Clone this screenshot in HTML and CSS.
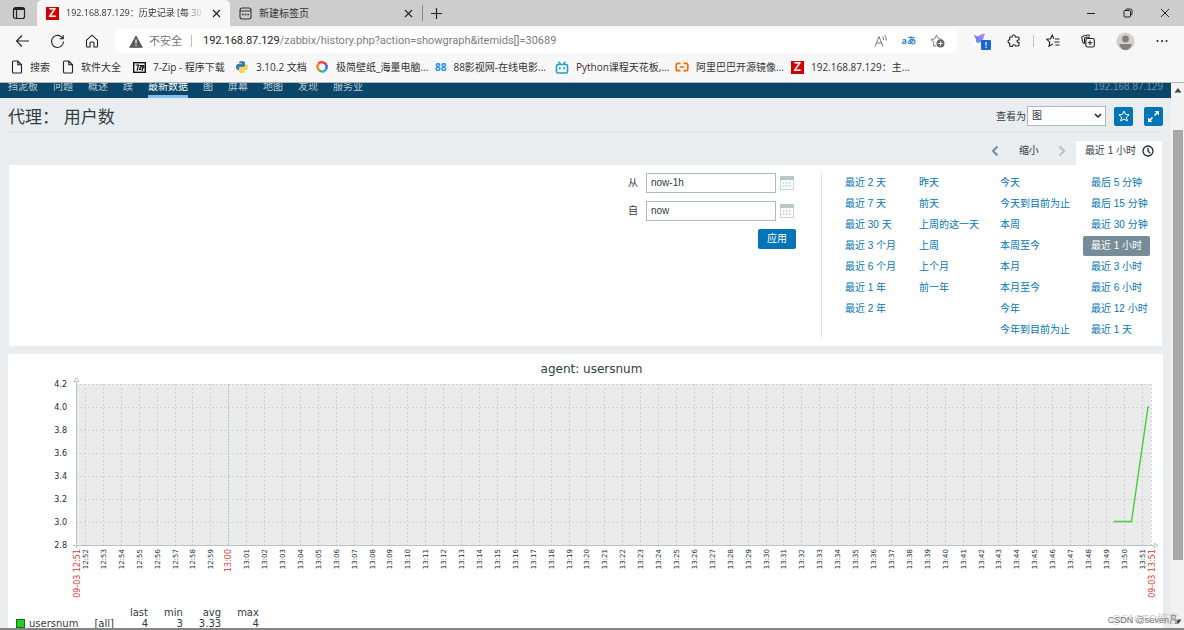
FILE: index.html
```html
<!DOCTYPE html>
<html lang="zh-CN">
<head>
<meta charset="utf-8">
<title>192.168.87.129：历史记录 [每 30 秒刷新]</title>
<link rel="stylesheet" href="styles.css">
</head>
<body>
<header class="browser">
  <div class="tabbar">
    <button class="icon-btn tab-actions" aria-label="标签操作菜单"><svg width="14" height="14" viewBox="0 0 14 14"><rect x="1.5" y="1.5" width="11" height="11" rx="2" fill="none" stroke="#222" stroke-width="1.2"/><path d="M2 3h10" stroke="#222" stroke-width="2" fill="none"/><path d="M4.500 4v8" stroke="#222" stroke-width="1.200"/></svg></button>
    <div class="tab tab-active">
      <span class="zlogo">Z</span>
      <span class="tab-title fade">192.168.87.129：历史记录 [每 30</span>
      <button class="icon-btn" aria-label="关闭标签页"><svg width="9" height="9" viewBox="0 0 9 9"><path d="M1 1l7 7M8 1l-7 7" stroke="#222" stroke-width="1.1"/></svg></button>
    </div>
    <div class="tab">
      <svg width="13" height="13" viewBox="0 0 13 13" fill="none" stroke="#333"><rect x="1" y="1" width="11" height="11" rx="2.200" stroke-width="1.100"/><path d="M1 4h11" stroke-width="1"/><path d="M3 7.500h1.600M5.700 7.500h1.600M8.400 7.500H10" stroke-width="1.600"/></svg>
      <span class="tab-title">新建标签页</span>
      <button class="icon-btn" aria-label="关闭标签页"><svg width="9" height="9" viewBox="0 0 9 9"><path d="M1 1l7 7M8 1l-7 7" stroke="#222" stroke-width="1.1"/></svg></button>
    </div>
    <span class="tab-sep"></span>
    <button class="icon-btn" aria-label="新建标签页"><svg width="13" height="13" viewBox="0 0 13 13"><path d="M6.500 1v11M1 6.500h11" stroke="#222" stroke-width="1.200"/></svg></button>
    <div class="window-btns">
      <button class="icon-btn" aria-label="最小化"><svg width="10" height="10" viewBox="0 0 10 10"><path d="M1 5.500h8" stroke="#222"/></svg></button>
      <button class="icon-btn" aria-label="还原"><svg width="10" height="10" viewBox="0 0 10 10" fill="none" stroke="#222"><rect x="1" y="2.500" width="6.500" height="6.500" rx="1"/><path d="M3 2V1.700Q3 1 4 1h3.500Q9 1 9 2.500V6q0 1-1 1"/></svg></button>
      <button class="icon-btn" aria-label="关闭"><svg width="10" height="10" viewBox="0 0 10 10"><path d="M1 1l8 8M9 1l-8 8" stroke="#222"/></svg></button>
    </div>
  </div>

  <div class="toolbar">
    <div class="nav-btns">
      <button class="icon-btn" aria-label="后退"><svg width="15" height="14" viewBox="0 0 15 14" fill="none" stroke="#222" stroke-width="1.100"><path d="M14 7H1.500M7 1.500L1.500 7 7 12.500"/></svg></button>
      <button class="icon-btn" aria-label="刷新"><svg width="15" height="15" viewBox="0 0 15 15" fill="none" stroke="#222" stroke-width="1.100"><path d="M13.500 7.500a6 6 0 1 1-2.200-4.700L13 4.500M13.200 1v3.700H9.500"/></svg></button>
      <button class="icon-btn" aria-label="主页"><svg width="14" height="14" viewBox="0 0 14 14" fill="none" stroke="#222" stroke-width="1.100"><path d="M1.500 6.200L7 1.200l5.500 5V12q0 1-1 1H9V9q0-1-1-1H6q-1 0-1 1v4H2.500q-1 0-1-1z"/></svg></button>
    </div>
    <div class="address">
      <svg width="14" height="13" viewBox="0 0 14 13"><path d="M7 1l6.300 11.300H.700z" fill="#5c5c5c" stroke="#5c5c5c" stroke-linejoin="round"/><path d="M7 4.500v4M7 9.700v1.300" stroke="#fff" stroke-width="1.200"/></svg>
      <span class="insecure">不安全</span>
      <span class="addr-sep"></span>
      <span class="url"><b class="host">192.168.87.129</b>/zabbix/history.php?action=showgraph&amp;itemids[]=30689</span>
      <button class="icon-btn" aria-label="大声朗读"><svg width="14" height="14" viewBox="0 0 14 14" fill="none" stroke="#777" stroke-width="1"><path d="M1 12.500L5 2.500l4 10M2.500 9h5M8.500 2.500q1.500 1.500 1 3.500M10.500 1q2.500 2.500 1.500 5.500"/></svg></button>
      <button class="icon-btn translate" aria-label="翻译">aあ</button>
      <button class="icon-btn" aria-label="添加收藏"><svg width="15" height="14" viewBox="0 0 15 14" fill="none" stroke="#777"><path d="M6.500 12H3.500L4 8.300 1 5.500l3.700-.7L6.500 1.200l1.900 3.600 3.800.6"/><circle cx="10.500" cy="9.500" r="4" fill="#666" stroke="none"/><path d="M10.500 7.300v4.400M8.300 9.500h4.400" stroke="#fff"/></svg></button>
    </div>
    <div class="ext-btns">
      <button class="icon-btn ext-first" aria-label="扩展"><svg width="18" height="18" viewBox="0 0 18 18"><rect width="13" height="13" rx="2" fill="#fff"/><path d="M1 2q2 3 5 2 3-3 6-2l-1 2q-1 6-6 7-3-1-2-4-2-2-2-5z" fill="#7b82f3"/><path d="M6 4q3-3 6-2L9 6z" fill="#b58af0"/><rect x="8" y="8" width="10" height="10" rx="1" fill="#1a66d6"/><path d="M13 10v3.700M13 14.800v1.200" stroke="#fff" stroke-width="1.200"/></svg></button>
      <button class="icon-btn" aria-label="扩展程序"><svg width="14" height="14" viewBox="0 0 14 14" fill="none" stroke="#222" stroke-width="1.100"><path d="M3 3h2.200q-.2-2 1.500-2t1.600 2H11q1 0 1 1v2q-2-.2-2 1.200T12 8.500V11q0 1-1 1H8.500q0-1.300-1.500-1.300T5.500 12.500H4q-1.300 0-1.300-1V9.200Q1 9 1 7.400t1.700-1.600V3.500z"/></svg></button>
      <span class="addr-sep"></span>
      <button class="icon-btn" aria-label="收藏夹"><svg width="14" height="14" viewBox="0 0 14 14" fill="none" stroke="#222" stroke-width="1.100"><path d="M6.800 10L3 12.200l.8-4.100L.8 5.300l3.700-.5 1.700-3.600L8 4.800M9 5h4.500M8.500 8h5M9.500 11h4"/></svg></button>
      <button class="icon-btn" aria-label="集锦"><svg width="14" height="14" viewBox="0 0 14 14" fill="none" stroke="#222" stroke-width="1.100"><path d="M3.500 9.500Q2 9.500 1.700 8L.8 4q-.2-1.500 1-1.800l5-1.200Q8 .8 8.700 2"/><path d="M9 3.200H5.300Q3.500 3.200 3.500 5v4.500"/><rect x="4.800" y="4.500" width="8.500" height="8.500" rx="1.800"/><path d="M9 6.500v4.500M6.800 8.800h4.500"/></svg></button>
      <button class="icon-btn" aria-label="用户"><svg width="19" height="19" viewBox="0 0 19 19"><circle cx="9.500" cy="9.500" r="9" fill="#d2d0ce"/><circle cx="9.500" cy="7" r="3.400" fill="#83807e"/><path d="M3.500 13.300q0-1.300 1.300-1.300h9.400q1.300 0 1.300 1.300Q14 18 9.500 18t-6-4.700z" fill="#83807e"/></svg></button>
      <button class="icon-btn" aria-label="更多"><svg width="12" height="4" viewBox="0 0 12 4" fill="#222"><circle cx="1.500" cy="2" r="1"/><circle cx="6" cy="2" r="1"/><circle cx="10.500" cy="2" r="1"/></svg></button>
    </div>
  </div>

  <nav class="bookmarks">
    <a href="#"><svg width="12" height="14" viewBox="0 0 12 14" fill="none" stroke="#222" stroke-width="1.100"><path d="M2.500 1h4.300L10.500 4.800V12q0 1-1 1h-7q-1 0-1-1V2q0-1 1-1zM6.800 1v3.800h3.700"/></svg><span>搜索</span></a>
    <a href="#"><svg width="12" height="14" viewBox="0 0 12 14" fill="none" stroke="#222" stroke-width="1.100"><path d="M2.500 1h4.300L10.500 4.800V12q0 1-1 1h-7q-1 0-1-1V2q0-1 1-1zM6.800 1v3.800h3.700"/></svg><span>软件大全</span></a>
    <a href="#"><svg width="13" height="11" viewBox="0 0 13 11"><rect x=".7" y=".7" width="11.600" height="9.600" fill="#fff" stroke="#111" stroke-width="1.400"/><path d="M2.500 3h3L4 8.500M6.500 3.500h1.700L6.500 7.500h1.700M9.300 9V3.500h1.500V6H9.500" stroke="#111" stroke-width="1.200" fill="none"/></svg><span>7-Zip - 程序下载</span></a>
    <a href="#"><svg width="14" height="14" viewBox="0 0 14 14"><path d="M4 3q0-2 3-2t3 2v2.500Q10 7 8.500 7h-3Q4 7 4 9v1H3q-2 0-2-3t2-3h4V3.500H4z" fill="#3e7cad"/><path d="M10 11q0 2-3 2t-3-2V8.800Q4 7.500 5.500 7.500h3Q10.500 7.500 10.500 5V4h.5q2 0 2 3t-2 3H7v.5h3z" fill="#fbd144"/></svg><span>3.10.2 文档</span></a>
    <a href="#"><svg width="14" height="14" viewBox="0 0 14 14" fill="none" stroke-width="2.400"><path d="M3.500 3.500Q5 2 7.500 2" stroke="#e8432f"/><path d="M7.500 2l4 2.500" stroke="#e53935"/><path d="M11.500 4.500V9" stroke="#3a5fe0"/><path d="M11.500 9L8 12" stroke="#22b5e8"/><path d="M8 12L4 10.500" stroke="#43b649"/><path d="M4 10.500L2.200 7l1.500-3.500" stroke="#f08a24"/></svg><span>极简壁纸_海量电脑...</span></a>
    <a href="#"><b class="b88">88</b><span>88影视网-在线电影...</span></a>
    <a href="#"><svg width="14" height="13" viewBox="0 0 14 13" fill="none" stroke="#19a3d9" stroke-width="1.600"><rect x="1.500" y="3.500" width="11" height="8.500" rx="1.500"/><path d="M3.500.7l2 2.300M10.500.7l-2 2.300M4.800 6.300v2M9.200 6.300v2"/></svg><span>Python课程天花板,...</span></a>
    <a href="#"><svg width="14" height="10" viewBox="0 0 14 10" fill="none" stroke="#ff6a00" stroke-width="1.700"><path d="M5.500 1.300H3q-1.800 0-1.800 1.800v3.800Q1.200 8.700 3 8.700h2.500M8.500 1.300H11q1.800 0 1.800 1.800v3.800q0 1.800-1.800 1.800H8.500M4.700 5h4.600"/></svg><span>阿里巴巴开源镜像...</span></a>
    <a href="#"><b class="zlogo">Z</b><span>192.168.87.129：主...</span></a>
  </nav>
</header>

<div class="viewport">
  <div class="page">
    <nav class="topnav">
      <a href="#">挡泥板</a><a href="#">问题</a><a href="#">概述</a><a href="#">蹼</a><a href="#" class="current">最新数据</a><a href="#">图</a><a href="#">屏幕</a><a href="#">地图</a><a href="#">发现</a><a href="#">服务业</a>
      <span class="server">192.168.87.129</span>
    </nav>
    <main>
      <div class="heading">
        <h1>代理： 用户数</h1>
        <label for="view">查看为</label>
        <span class="select-wrap"><select id="view"><option>图</option></select><svg class="chev" width="8" height="6" viewBox="0 0 8 6"><path d="M1 1l3 3 3-3" fill="none" stroke="#222" stroke-width="1.500"/></svg></span>
        <button class="blue sq" aria-label="收藏"><svg width="12" height="12" viewBox="0 0 12 12" fill="none" stroke="#fff"><path d="M6 1l1.500 3.400 3.700.3-2.800 2.500.9 3.700L6 9l-3.300 1.900.9-3.700L.8 4.700l3.700-.3z"/></svg></button>
        <button class="blue sq" aria-label="全屏"><svg width="13" height="13" viewBox="0 0 13 13" fill="#fff"><path d="M7.500 1H12v4.500zM1 7.500V12h4.500z"/><path d="M7.500 5.500L10 3M3 10l2.500-2.500" stroke="#fff" stroke-width="1.600"/></svg></button>
      </div>

      <div class="timenav">
        <button class="icon-btn" aria-label="向前"><svg width="8" height="12" viewBox="0 0 8 12"><path d="M6.500 1.500L2 6l4.500 4.500" fill="none" stroke="#768d99" stroke-width="2"/></svg></button>
        <button class="zoomout">缩小</button>
        <button class="icon-btn" aria-label="向后"><svg width="8" height="12" viewBox="0 0 8 12"><path d="M1.500 1.500L6 6l-4.500 4.500" fill="none" stroke="#b4c2ca" stroke-width="2"/></svg></button>
        <a href="#" class="timetab">最近 1 小时 <svg width="12" height="12" viewBox="0 0 12 12" fill="none" stroke="#1f2c33" stroke-width="1.300"><circle cx="6" cy="6" r="5"/><path d="M6 2.800V6l2.200 2.200"/></svg></a>
      </div>

      <section class="filter">
        <form class="range">
          <label for="from">从</label><input id="from" type="text" value="now-1h">
          <button type="button" class="icon-btn" aria-label="日历"><svg width="14" height="14" viewBox="0 0 14 14"><rect x=".5" y=".5" width="13" height="13" fill="#fff" stroke="#c8d2d7"/><path d="M0 0h14v4H0z" fill="#b9c6cc"/><path d="M3 7h8M3 10h8" stroke="#b9c6cc" stroke-width="1.500" stroke-dasharray="1.500 1.500"/></svg></button>
          <label for="to">自</label><input id="to" type="text" value="now">
          <button type="button" class="icon-btn" aria-label="日历"><svg width="14" height="14" viewBox="0 0 14 14"><rect x=".5" y=".5" width="13" height="13" fill="#fff" stroke="#c8d2d7"/><path d="M0 0h14v4H0z" fill="#b9c6cc"/><path d="M3 7h8M3 10h8" stroke="#b9c6cc" stroke-width="1.500" stroke-dasharray="1.500 1.500"/></svg></button>
          <button type="button" class="blue apply">应用</button>
        </form>
        <div class="presets">
          <ul><li><a href="#">最近 2 天</a></li><li><a href="#">最近 7 天</a></li><li><a href="#">最近 30 天</a></li><li><a href="#">最近 3 个月</a></li><li><a href="#">最近 6 个月</a></li><li><a href="#">最近 1 年</a></li><li><a href="#">最近 2 年</a></li></ul>
          <ul><li><a href="#">昨天</a></li><li><a href="#">前天</a></li><li><a href="#">上周的这一天</a></li><li><a href="#">上周</a></li><li><a href="#">上个月</a></li><li><a href="#">前一年</a></li></ul>
          <ul><li><a href="#">今天</a></li><li><a href="#">今天到目前为止</a></li><li><a href="#">本周</a></li><li><a href="#">本周至今</a></li><li><a href="#">本月</a></li><li><a href="#">本月至今</a></li><li><a href="#">今年</a></li><li><a href="#">今年到目前为止</a></li></ul>
          <ul><li><a href="#">最后 5 分钟</a></li><li><a href="#">最后 15 分钟</a></li><li><a href="#">最近 30 分钟</a></li><li><a href="#" class="selected">最近 1 小时</a></li><li><a href="#">最近 3 小时</a></li><li><a href="#">最近 6 小时</a></li><li><a href="#">最近 12 小时</a></li><li><a href="#">最近 1 天</a></li></ul>
        </div>
      </section>

      <section class="graph">
        <h2>agent: usersnum</h2>
        <svg id="plot" class="plot" viewBox="0 0 1155 226" role="img" aria-label="agent: usersnum"></svg>
        <table class="legend">
          <tr><th></th><th></th><th>last</th><th>min</th><th>avg</th><th>max</th></tr>
          <tr><td class="name"><span class="swatch"></span>usersnum</td><td class="fn">[all]</td><td>4</td><td>3</td><td>3.33</td><td>4</td></tr>
        </table>
      </section>
    </main>
  </div>
  <div class="scrollbar">
    <svg width="8" height="5" viewBox="0 0 8 5"><path d="M4 0l3.500 4.500h-7z" fill="#444"/></svg>
    <div class="track"><div class="thumb"></div></div>
    <svg width="8" height="5" viewBox="0 0 8 5"><path d="M4 5L.5.5h7z" fill="#333"/></svg>
  </div>
  <span class="mark mark-b">@51CTO博客</span>
  <span class="mark">CSDN @seven凡</span>
</div>
<script src="chart.js"></script>
</body>
</html>
```
FILE: styles.css
```css
* { box-sizing: border-box; }
body {
  margin: 0;
  height: 100vh;
  display: flex;
  flex-direction: column;
  overflow: hidden;
  font: 10px/20px "Liberation Sans", "Noto Sans CJK SC", sans-serif;
  color: #2f3c43;
  border-bottom: 2px solid #858585;
}
a { color: inherit; text-decoration: none; }
button, input, select { font: inherit; color: inherit; }
svg { display: block; flex: none; }
.icon-btn {
  border: 0;
  padding: 0;
  background: none;
  display: flex;
  align-items: center;
  flex: none;
}

/* browser frame */
.browser {
  font-family: "Open Sans", "Noto Sans CJK SC", sans-serif;
  background: #f7f7f7;
  color: #333;
  border-bottom: 1px solid #b5b5b5;
  flex: none;
}
.tabbar {
  height: 26px;
  background: #cdcdcd;
  display: flex;
  align-items: center;
}
.tab-actions { width: 37px; padding-left: 12px; }
.tab {
  width: 192px;
  height: 26px;
  padding: 0 9px 0 9px;
  display: flex;
  align-items: center;
  gap: 7px;
}
.tab-active { width: 193px; background: #f7f7f7; border-radius: 5px 5px 0 0; }
.tab-title { flex: 1; white-space: nowrap; }
.fade {
  font-size: 9px;
  -webkit-mask-image: linear-gradient(90deg, #000 85%, transparent);
  mask-image: linear-gradient(90deg, #000 85%, transparent);
}
.zlogo {
  width: 13px;
  height: 13px;
  background: #d40000;
  color: #fff;
  font: bold 12px/13px "Liberation Sans", sans-serif;
  text-align: center;
  flex: none;
}
.tab-sep { width: 1px; height: 16px; background: #888; margin-right: 7px; }
.window-btns { margin-left: auto; display: flex; gap: 27px; padding-right: 14px; }

.toolbar { height: 30px; display: flex; align-items: center; }
.nav-btns { width: 115px; padding-left: 15px; display: flex; gap: 20px; align-items: center; }
.address {
  flex: 1;
  height: 24px;
  background: #fff;
  border-radius: 4px;
  padding: 0 12px 0 14px;
  display: flex;
  align-items: center;
  gap: 6px;
  font-size: 11px;
}
.address .icon-btn { margin-left: 8px; }
.insecure { color: #767676; }
.addr-sep { width: 1px; height: 12px; background: #c0c0c0; }
.address .addr-sep { margin: 0 5px 0 3px; }
.url { flex: 1; color: #7d7d7d; white-space: nowrap; overflow: hidden; font-family: Roboto, sans-serif; }
.host { font-weight: normal; color: #222; }
.address .translate { color: #2b88d8; font-weight: bold; font-size: 9px; height: 14px; }
.ext-btns { display: flex; align-items: center; gap: 21px; padding: 0 16px; }
.ext-btns .ext-first { margin-right: -5px; }
.ext-btns .addr-sep { margin: 0 -9px; }

.bookmarks {
  height: 26px;
  padding-left: 11px;
  display: grid;
  grid-template-columns: 51px 71px 102px 80px 120px 120px 120px 116px 1fr;
  align-items: center;
  padding-bottom: 4px;
}
.bookmarks a { display: flex; align-items: center; gap: 7px; white-space: nowrap; }
.b88 { color: #1a8cf0; font: bold 10px/13px "Open Sans", sans-serif; }

/* page area */
.viewport { flex: 1; min-height: 0; display: flex; position: relative; }
.page { flex: 1; overflow: hidden; background: #e9edf0; }
.topnav {
  height: 15px;
  background: #0a466a;
  color: #b9cbd6;
  padding: 0 8px;
  display: flex;
  align-items: flex-end;
  gap: 15px;
  overflow: hidden;
  line-height: 22px;
}
.topnav .current { color: #fff; box-shadow: inset 0 -3px #7dc1f2; }
.server { margin-left: auto; color: #6f90a5; }

main { padding: 0 8px; }
.heading {
  height: 35px;
  border-bottom: 1px solid #dfe4e7;
  display: flex;
  align-items: center;
  padding-top: 2px;
}
h1 { margin: 0 auto 0 0; padding-top: 4px; font-size: 17px; font-weight: normal; line-height: 24px; }
.heading label { margin-right: 1px; padding-top: 2px; }
.select-wrap { position: relative; width: 79px; margin-right: 8px; }
select {
  appearance: none;
  display: block;
  width: 100%;
  height: 20px;
  padding: 0 4px;
  line-height: 18px;
  background: #fff;
  border: 1px solid #acbbc2;
  border-radius: 0;
}
.chev { position: absolute; right: 4px; top: 7px; }
.blue { border: 0; border-radius: 2px; background: #0275b8; color: #fff; }
.sq { width: 19px; height: 19px; padding: 0; display: grid; place-items: center; }
.sq + .sq { margin-left: 11px; }

.timenav { display: flex; justify-content: flex-end; align-items: center; padding: 8px 1px 0 0; }
.timenav > button { margin-bottom: 4px; }
.timenav .zoomout { border: 0; background: none; padding: 0; margin: 0 19px 4px 20px; line-height: 20px; }
.timetab {
  margin-left: 10px;
  padding: 0 8px 4px 9px;
  background: #fff;
  line-height: 20px;
  display: flex;
  align-items: center;
  gap: 6px;
}

.filter {
  margin: 0 1px;
  background: #fff;
  padding: 8px 0;
  height: 181px;
  display: flex;
  justify-content: flex-end;
}
.range {
  display: grid;
  grid-template-columns: 18px 130px 20px;
  grid-auto-rows: 20px;
  row-gap: 8px;
  align-content: start;
  padding-right: 25px;
}
.range input {
  width: 100%;
  height: 20px;
  border: 1px solid #acbbc2;
  border-radius: 0;
  padding: 0 4px;
  background: #fff;
}
.range .icon-btn { padding-left: 4px; }
.apply { grid-column: 1 / -1; justify-self: end; width: 38px; padding: 0; }
.presets {
  border-left: 1px solid #dfe4e7;
  padding-left: 15px;
  display: grid;
  grid-template-columns: 74px 81px 91px 79px;
}
ul { list-style: none; margin: -1px 0 0; padding: 0; }
li { height: 21px; display: flex; align-items: center; white-space: nowrap; }
li a { color: #0275b8; padding: 0 8px; border-radius: 2px; }
li .selected { background: #768d99; color: #fff; }

.graph { margin-top: 8px; background: #fff; min-height: 300px; font-family: "DejaVu Sans", sans-serif; }
h2 { margin: 0; padding: 8px 0 0 12px; text-align: center; font-size: 12px; line-height: 15px; font-weight: normal; }
.plot { width: 100%; }
.plot text { font-size: 8px; fill: #1f2c33; }
.plot .time { font-size: 7px; }
.plot .red { fill: #e33734; font-size: 8px; }
.plot .bg { fill: #ebebeb; }
.plot .grid { stroke: #ccd5d9; stroke-dasharray: 2 2; }
.plot .major { stroke: #b0c0c8; stroke-dasharray: 2 1; }
.plot .axis { stroke: #b6c3ca; fill: none; }
.plot .line { stroke: #3fd23a; stroke-width: 1.4; fill: none; }
.legend { margin: 4px 0 0 8px; border-collapse: collapse; font-size: 10px; line-height: 11px; }
.legend th, .legend td { padding: 0 0 0 16px; font-weight: normal; text-align: right; }
.legend .name { padding: 0; }
.swatch {
  display: inline-block;
  width: 9px;
  height: 9px;
  margin-right: 4px;
  background: #1fd11f;
  border: 1px solid #1c6b1c;
  vertical-align: -1px;
}

.scrollbar {
  width: 13px;
  background: #f1f1f1;
  display: flex;
  flex-direction: column;
  align-items: center;
  padding: 5px 0 4px;
}
.track { flex: 1; width: 10px; padding-top: 37px; }
.thumb { height: 88%; background: #a8a8a8; }

.mark { position: absolute; right: 6px; bottom: 0; font-size: 9px; line-height: 16px; color: #777; }
.mark-b { bottom: 1px; font-size: 11px; color: #d0d0d0; right: 5px; }
```
FILE: chart.js
```js
const NS = "http://www.w3.org/2000/svg";
const plot = document.getElementById("plot");
const LEFT = 68, RIGHT = 1143, TOP = 7, BOTTOM = 168;

function add(tag, attrs, text) {
  const el = document.createElementNS(NS, tag);
  for (const key in attrs) el.setAttribute(key, attrs[key]);
  if (text) el.textContent = text;
  plot.appendChild(el);
}

function timeLabel(x, text, cls) {
  add("text", {
    class: cls,
    "text-anchor": "end",
    transform: `translate(${x + 3} 172) rotate(-90)`
  }, text);
}

add("rect", { class: "bg", x: LEFT, y: TOP, width: RIGHT - LEFT, height: BOTTOM - TOP });

["4.2", "4.0", "3.8", "3.6", "3.4", "3.2", "3.0", "2.8"].forEach((value, i) => {
  const y = Math.round(TOP + i * (BOTTOM - TOP) / 7) + 0.5;
  if (i < 7) add("path", { class: "grid", d: `M${LEFT} ${y}H${RIGHT}` });
  add("text", { x: 59, y: y + 2.5, "text-anchor": "end" }, value);
});

for (let i = 0; i < 60; i++) {
  const minute = 52 + i;
  const label = `${minute < 60 ? 12 : 13}:${String(minute % 60).padStart(2, "0")}`;
  const x = Math.round(77 + i * 17.91) + 0.5;
  const major = minute === 60;
  add("path", { class: major ? "grid major" : "grid", d: `M${x} ${TOP}V${BOTTOM}` });
  timeLabel(x - 1, label, major ? "red" : "time");
}
add("path", { class: "grid", d: `M${RIGHT}.5 ${TOP}V${BOTTOM}` });
timeLabel(LEFT + 1, "09-03 12:51", "red");
timeLabel(RIGHT + 1, "09-03 13:51", "red");

add("path", { class: "axis", d: `M${LEFT}.5 5V${BOTTOM + 3}M65 ${BOTTOM}.5H1146` });
add("path", { class: "axis", d: "M66 4.500h5L68.500 0.500zM1146 166v5l4-2.500z" });
add("path", { class: "line", d: "M1105.500 144.500H1123.500L1140 30H1141" });
```
